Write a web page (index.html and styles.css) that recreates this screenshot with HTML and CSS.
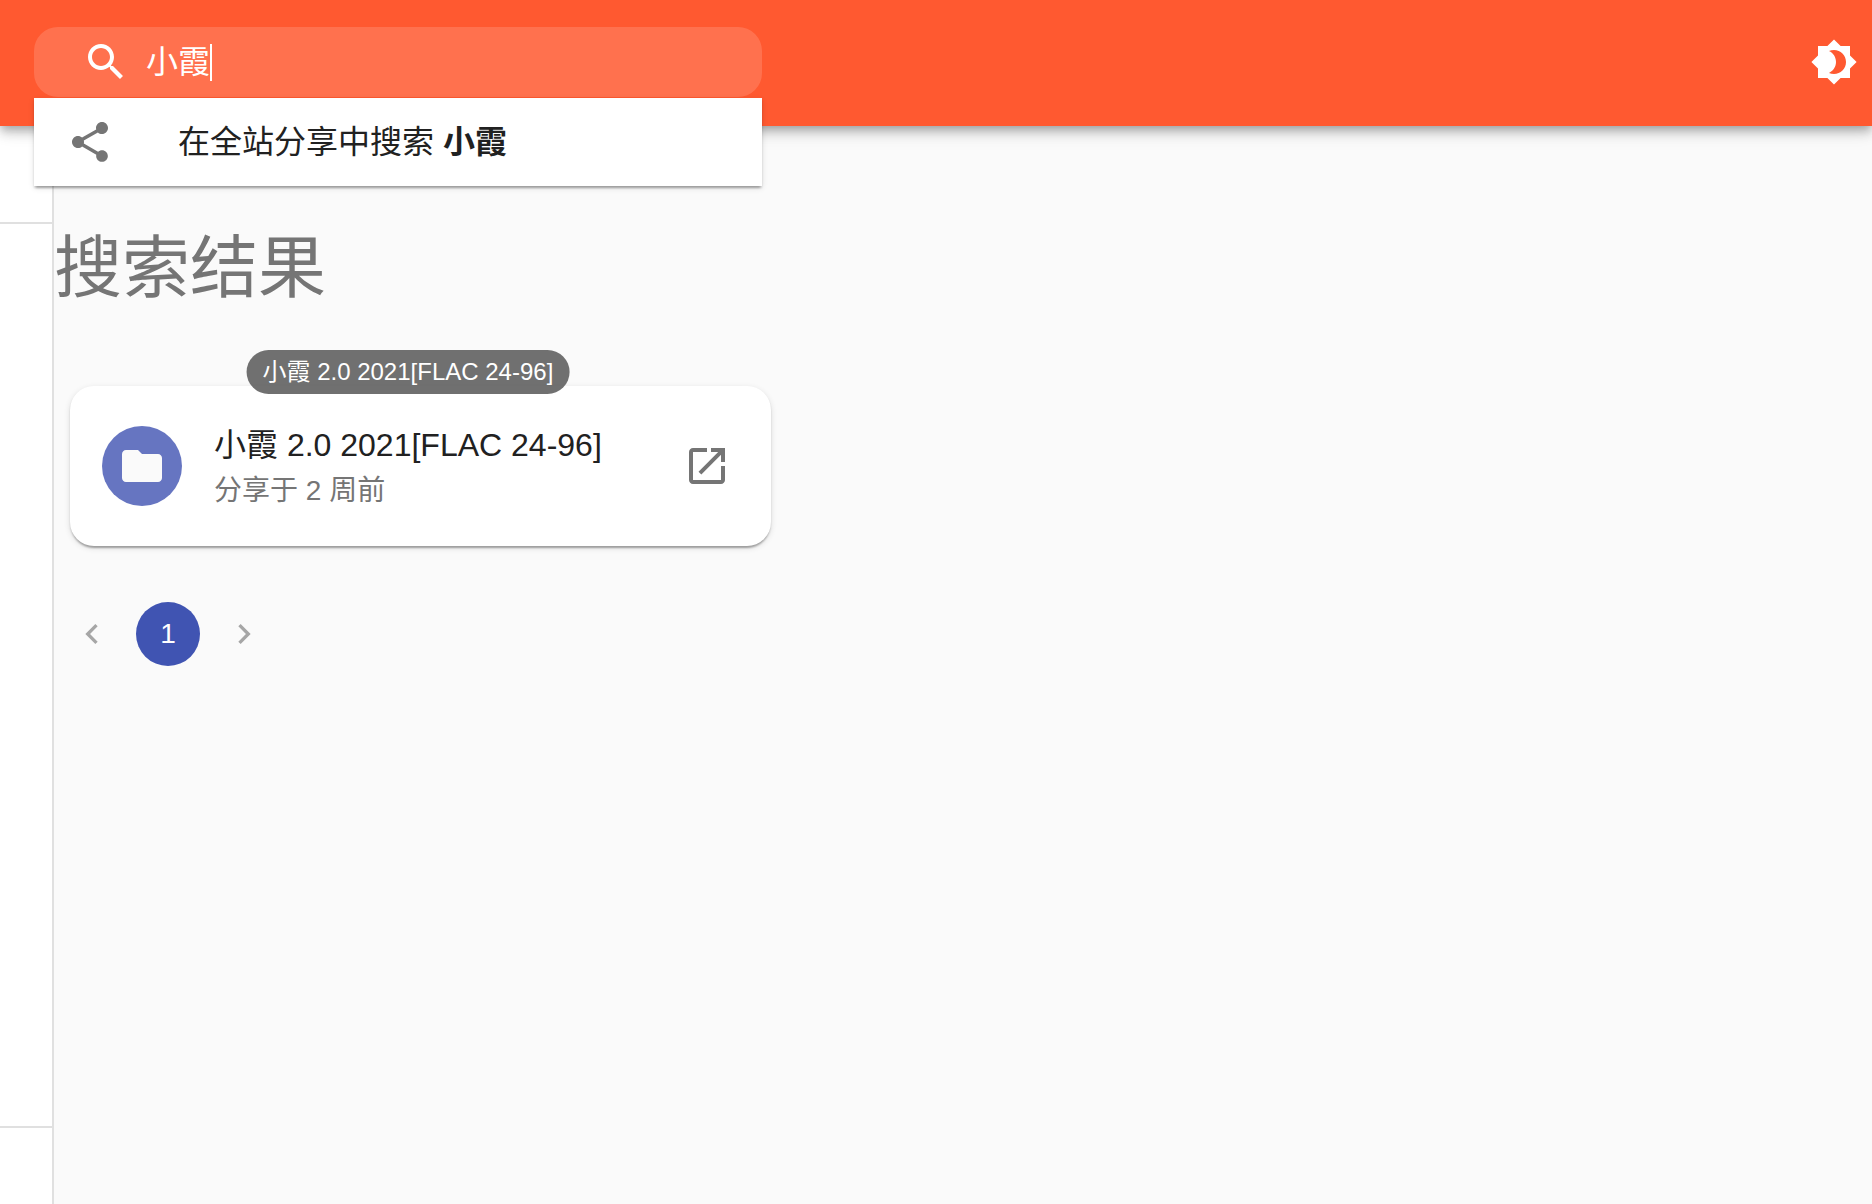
FILE: index.html
```html
<!DOCTYPE html>
<html lang="zh-CN">
<head>
    <meta charset="UTF-8">
    <meta name="viewport" content="width=device-width, initial-scale=1.0">
    <title>搜索结果</title>
    <link rel="stylesheet" href="styles.css">
</head>

<body>
    <header class="appbar">
        <form class="search" role="search">
            <label class="search-label" for="keyword" aria-label="搜索">
                <svg class="icon" viewBox="0 0 24 24"><path d="M15.5 14h-.79l-.28-.27C15.41 12.59 16 11.11 16 9.5 16 5.91 13.09 3 9.5 3S3 5.91 3 9.5 5.91 16 9.5 16c1.61 0 3.09-.59 4.23-1.57l.27.28v.79l5 4.99L20.49 19l-4.99-5zm-6 0C7.01 14 5 11.99 5 9.5S7.01 5 9.5 5 14 7.01 14 9.5 11.99 14 9.5 14z"/></svg>
            </label>
            <input class="search-input" id="keyword" type="text" value="小霞" autocomplete="off" autofocus>
            <span class="caret"></span>
            <div class="suggest">
                <a class="suggest-item" href="#">
                    <svg class="icon" viewBox="0 0 24 24"><path d="M18 16.08c-.76 0-1.44.3-1.96.77L8.91 12.7c.05-.23.09-.46.09-.7s-.04-.47-.09-.7l7.05-4.11c.54.5 1.25.81 2.04.81 1.66 0 3-1.34 3-3s-1.34-3-3-3-3 1.34-3 3c0 .24.04.47.09.7L8.04 9.81C7.5 9.31 6.79 9 6 9c-1.66 0-3 1.34-3 3s1.34 3 3 3c.79 0 1.5-.31 2.04-.81l7.12 4.16c-.05.21-.08.43-.08.65 0 1.61 1.31 2.92 2.92 2.92s2.92-1.31 2.92-2.92-1.31-2.92-2.92-2.92z"/></svg>
                    <span>在全站分享中搜索 <strong>小霞</strong></span>
                </a>
            </div>
        </form>
        <button class="theme-btn" type="button" aria-label="切换主题">
            <svg class="icon" viewBox="0 0 24 24"><path d="M20 8.69V4h-4.69L12 .69 8.69 4H4v4.69L.69 12 4 15.31V20h4.69L12 23.31 15.31 20H20v-4.69L23.31 12 20 8.69zM12 18c-.89 0-1.74-.2-2.5-.55C11.56 16.5 13 14.42 13 12s-1.44-4.5-3.5-5.45C10.26 6.2 11.11 6 12 6c3.31 0 6 2.69 6 6s-2.69 6-6 6z"/></svg>
        </button>
    </header>

    <div class="wrap">
        <aside class="drawer">
            <div class="drawer-top"></div>
            <div class="drawer-list"></div>
            <div class="drawer-foot"></div>
        </aside>
        <main class="content">
            <h1 class="title">搜索结果</h1>
            <div class="card">
                <span class="avatar">
                    <svg class="icon" viewBox="0 0 24 24"><path d="M10 4H4c-1.1 0-1.99.9-1.99 2L2 18c0 1.1.9 2 2 2h16c1.1 0 2-.9 2-2V8c0-1.1-.9-2-2-2h-8l-2-2z"/></svg>
                </span>
                <div class="info">
                    <div class="name">
                        小霞 2.0 2021[FLAC 24-96]
                        <span class="tooltip" role="tooltip">小霞 2.0 2021[FLAC 24-96]</span>
                    </div>
                    <div class="time">分享于 2 周前</div>
                </div>
                <a class="open" href="#" aria-label="打开">
                    <svg class="icon" viewBox="0 0 24 24"><path d="M19 19H5V5h7V3H5c-1.11 0-2 .9-2 2v14c0 1.1.89 2 2 2h14c1.1 0 2-.9 2-2v-7h-2v7zM14 3v2h3.59l-9.83 9.83 1.41 1.41L19 6.41V10h2V3h-7z"/></svg>
                </a>
            </div>
            <nav class="pages" aria-label="分页">
                <button class="page" type="button" aria-label="上一页" disabled>
                    <svg class="arrow" viewBox="0 0 24 24"><path d="M15.41 7.41L14 6l-6 6 6 6 1.41-1.41L10.83 12z"/></svg>
                </button>
                <button class="page current" type="button">1</button>
                <button class="page" type="button" aria-label="下一页" disabled>
                    <svg class="arrow" viewBox="0 0 24 24"><path d="M10 6L8.59 7.41 13.17 12l-4.58 4.59L10 18l6-6z"/></svg>
                </button>
            </nav>
        </main>
    </div>
</body>

</html>
```

FILE: styles.css
```css
* {
    box-sizing: border-box;
}

body {
    margin: 0;
    min-height: 100vh;
    display: flex;
    flex-direction: column;
    background-color: #fafafa;
    color: #212121;
    font-family: "Liberation Sans", "Noto Sans CJK SC", sans-serif;
    font-size: 32px;
    line-height: 48px;
}

button,
input {
    margin: 0;
    padding: 0;
    border: 0;
    background: none;
    color: inherit;
    font: inherit;
}

button {
    cursor: pointer;
}

.icon {
    display: block;
    width: 48px;
    height: 48px;
    fill: currentColor;
}

/* 顶栏 */
.appbar {
    position: relative;
    z-index: 2;
    display: flex;
    align-items: center;
    justify-content: space-between;
    padding: 27px 14px 29px 34px;
    background-color: #ff5930;
    color: #fff;
    box-shadow: 0 4px 8px -2px rgba(0, 0, 0, .2), 0 8px 10px rgba(0, 0, 0, .14), 0 2px 20px rgba(0, 0, 0, .12);
}

.search {
    position: relative;
    display: flex;
    align-items: center;
    gap: 16px;
    width: 728px;
    max-width: 80%;
    height: 70px;
    padding: 0 16px 0 48px;
    border-radius: 24px;
    background-color: rgba(255, 255, 255, .15);
}

.search-input {
    flex: 1;
    min-width: 0;
    height: 48px;
    outline: none;
    caret-color: transparent;
}

/* 光标 */
.caret {
    position: absolute;
    top: 17px;
    left: 176px;
    width: 2px;
    height: 37px;
    background-color: #fff;
}

.suggest {
    position: absolute;
    top: 71px;
    left: 0;
    right: 0;
    background-color: #fff;
    box-shadow: 0 4px 2px -2px rgba(0, 0, 0, .2), 0 2px 2px rgba(0, 0, 0, .14), 0 2px 6px rgba(0, 0, 0, .12);
}

.suggest-item {
    display: flex;
    align-items: center;
    gap: 64px;
    padding: 20px 32px;
    color: #212121;
    text-decoration: none;
}

.suggest-item .icon {
    color: #757575;
}

/* 主体 */
.wrap {
    flex: 1;
    display: flex;
}

.drawer {
    width: 54px;
    display: flex;
    flex-direction: column;
    border-right: 2px solid #e0e0e0;
    background-color: #fff;
}

.drawer-top {
    height: 98px;
    border-bottom: 2px solid #e0e0e0;
}

.drawer-list {
    flex: 1;
    border-bottom: 2px solid #e0e0e0;
}

.drawer-foot {
    height: 76px;
}

.content {
    flex: 1;
    min-width: 0;
    padding-top: 100px;
}

.title {
    margin: 0;
    color: #757575;
    font-size: 68px;
    font-weight: 400;
    line-height: 84px;
}

.card {
    display: flex;
    align-items: center;
    gap: 32px;
    width: 701px;
    max-width: calc(100% - 32px);
    margin: 76px 16px 0;
    padding: 35px 16px 35px 32px;
    border-radius: 24px;
    background-color: #fff;
    box-shadow: 0 4px 2px -2px rgba(0, 0, 0, .2), 0 2px 2px rgba(0, 0, 0, .14), 0 2px 6px rgba(0, 0, 0, .12);
}

.avatar {
    display: flex;
    align-items: center;
    justify-content: center;
    width: 80px;
    height: 80px;
    border-radius: 50%;
    background-color: #6675c1;
    color: #fafafa;
}

.info {
    flex: 1;
}

.name {
    position: relative;
    width: max-content;
}

.tooltip {
    position: absolute;
    left: 50%;
    bottom: 75px;
    transform: translateX(-50%);
    padding: 6px 16px;
    border-radius: 22px;
    background-color: rgba(97, 97, 97, .9);
    color: #fff;
    font-size: 24px;
    line-height: 32px;
    white-space: nowrap;
}

.time {
    margin-top: 2px;
    color: #757575;
    font-size: 28px;
    line-height: 40px;
}

.open {
    margin: -24px 0;
    padding: 24px;
    color: #757575;
}

/* 分页 */
.pages {
    display: flex;
    gap: 12px;
    padding: 56px 6px;
}

.page {
    display: flex;
    align-items: center;
    justify-content: center;
    width: 64px;
    height: 64px;
    border-radius: 50%;
    font-size: 28px;
}

.page:disabled {
    color: #a6a6a6;
    cursor: default;
}

.page.current {
    background-color: #4054b2;
    color: #fff;
}

.arrow {
    width: 40px;
    height: 40px;
    fill: currentColor;
}
```
